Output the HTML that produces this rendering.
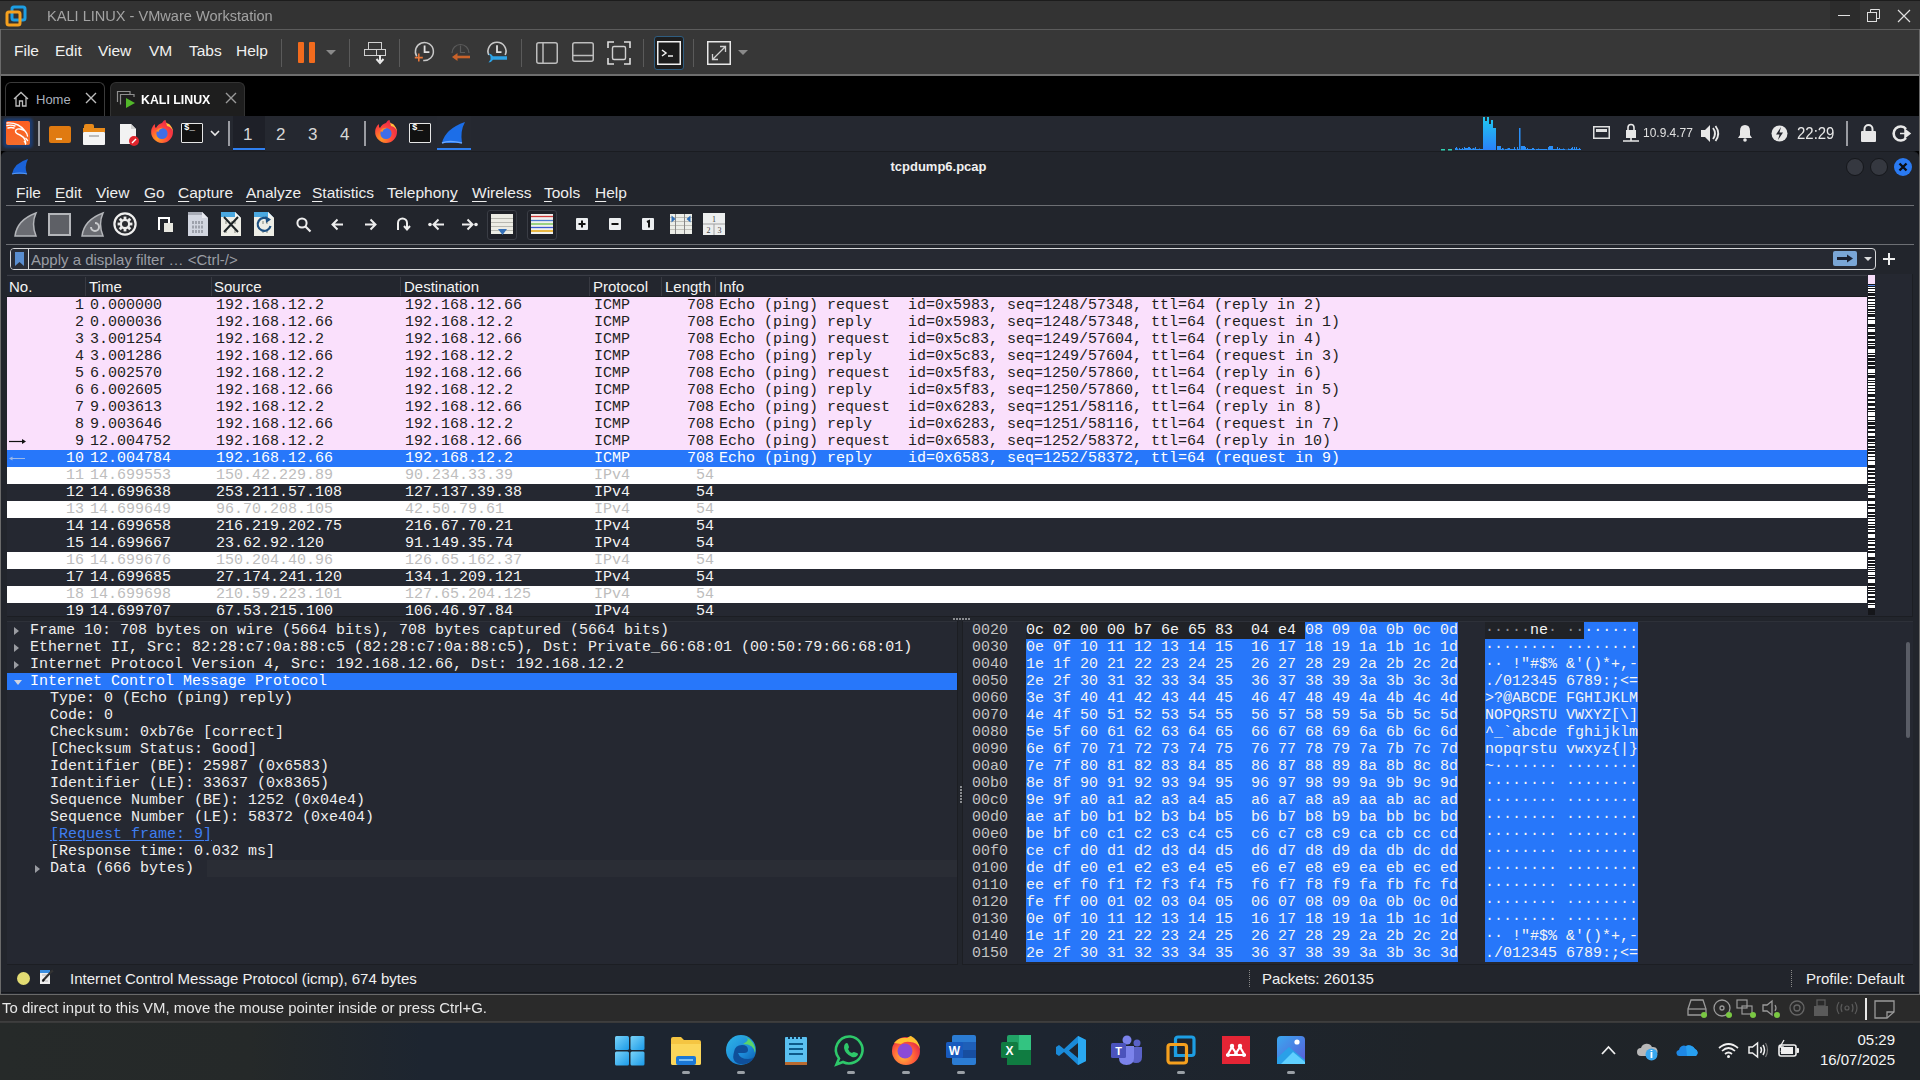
<!DOCTYPE html>
<html><head><meta charset="utf-8">
<style>
*{margin:0;padding:0;box-sizing:border-box}
html,body{width:1920px;height:1080px;overflow:hidden;background:#000;font-family:"Liberation Sans",sans-serif}
.a{position:absolute}
svg{position:absolute;overflow:visible}
/* vmware */
#vt{left:0;top:0;width:1920px;height:29px;background:#333333;border-top:1px solid #1c1c1c}
#vm{left:0;top:29px;width:1920px;height:47px;background:#373737;border-top:1px solid #5c5c5c;border-bottom:2px solid #6e6e6e}
.vmi{position:absolute;top:12px;font-size:15.5px;color:#f0f0f0}
.vsep{position:absolute;top:9px;width:1px;height:28px;background:#5a5a5a}
#tabs{left:0;top:76px;width:1920px;height:40px;background:#000}
.tab{position:absolute;top:6px;height:34px;border:1px solid #3a3a3a;border-bottom:none;border-radius:6px 6px 0 0}
/* kali panel */
#kp{left:0;top:116px;width:1920px;height:35px;background:#252830}
.ws{position:absolute;top:9px;font-size:17px;color:#d8d8d8}
/* wireshark */
#ww{left:1px;top:151px;width:1918px;height:843px;background:#22252c;border-radius:6px 6px 0 0;border-top:1px solid #1a1c21}
#edgeL{left:0;top:29px;width:1px;height:966px;background:#6a6a6a}
#edgeR{left:1919px;top:29px;width:1px;height:966px;background:#6a6a6a}
#wtitle{left:0;top:159px;width:1877px;text-align:center;font-size:13px;font-weight:bold;color:#f0f0f0}
.wm{position:absolute;top:184px;font-size:15.5px;color:#eeeeee}
.wm u{text-decoration:underline;text-decoration-thickness:1px;text-underline-offset:3px}
.wmn{position:absolute;top:183px;font-size:16px;color:#eeeeee}
#tbar{left:6px;top:205px;width:1908px;height:40px;border-top:1px solid #6d6f74;border-bottom:1px solid #6d6f74}
#filter{left:10px;top:248px;width:1866px;height:22px;border:1.5px solid #d7d8da;border-radius:4px;background:#262932}
/* packet list */
#plh{left:7px;top:275px;width:1860px;height:22px;background:#23262e;border-top:1px solid #3a3d45;border-bottom:1px solid #1a1c21}
.hd{position:absolute;top:278px;font-size:15px;color:#f4f4f4}
.hdv{position:absolute;top:277px;width:1px;height:19px;background:#383a42}
.pr{position:absolute;left:7px;width:1860px;height:17px;font-family:"Liberation Mono",monospace;font-size:15px;line-height:17px;white-space:pre}
.pr .c{position:absolute;top:0}
.pr.p{background:#fae0fc;color:#1e1e22}
.pr.s{background:#2777fa;color:#ffffff}
.pr.w{background:#ffffff;color:#bdbdbd}
.pr.d{background:#252831;color:#f4f4f4}
/* details */
#dp{left:7px;top:621px;width:950px;height:344px;background:#252831;border-top:1px solid #2e3139;border-bottom:1px solid #1c1e23}
.dr{position:absolute;left:7px;width:950px;height:17px;font-family:"Liberation Mono",monospace;font-size:15px;line-height:17px;color:#eeeeee;white-space:pre}
.dr .dt{position:absolute;top:0}
.dr.sel{background:#2777fa;color:#fff}
.dr.data{background:linear-gradient(90deg,#252831 0,#252831 200px,#2a2d35 200px)}
.dr.link .dt{color:#3f7ef0;text-decoration:underline;text-underline-offset:2px}
.tri{position:absolute;top:5px;width:0;height:0}
.tri.r{border-left:5px solid #9a9ca2;border-top:4px solid transparent;border-bottom:4px solid transparent;top:5px}
.tri.d{border-top:5px solid #d0d4e0;border-left:4px solid transparent;border-right:4px solid transparent;top:7px}
/* hex */
.hbg{position:absolute;height:17px}
.hbg.dk{background:#202227}
.hbg.bl{background:#2777fa}
.hr{position:absolute;left:0;width:1920px;height:17px;font-family:"Liberation Mono",monospace;font-size:15px;line-height:17px;white-space:pre;color:#f4f4f4}
.hr span{position:absolute;top:0}
.hr .ho{color:#c4c4c4}
.hr i{font-style:normal;color:#8a8c90}
/* status */
#st{left:1px;top:965px;width:1918px;height:28px;background:#22252c;border-bottom:1px solid #15171b}
#vs{left:0;top:994px;width:1920px;height:28px;background:#2a2a2a;border-top:1px solid #6a6a6a;border-bottom:1px solid #3e3e3e}
#tb{left:0;top:1022px;width:1920px;height:58px;background:linear-gradient(90deg,#262a29 0%,#252929 13%,#1d2530 22%,#1d2530 55%,#1f2429 75%,#202428 100%);border-top:1px solid #3a3a3a}
</style></head><body>

<!-- VMware title -->
<div id="vt" class="a">
 <svg style="left:5px;top:4px" width="22" height="22" viewBox="0 0 22 22">
  <rect x="7" y="2" width="13" height="13" rx="2" fill="none" stroke="#1d9ee3" stroke-width="3"/>
  <rect x="2" y="7" width="13" height="13" rx="2" fill="none" stroke="#f5a01e" stroke-width="3"/>
  <path d="M7 9.5 H13 M9.5 7 V13" stroke="#1d9ee3" stroke-width="0"/>
 </svg>
 <div class="a" style="left:47px;top:6px;font-size:15.5px;color:#a3a3a3;transform-origin:0 0;transform:scaleX(0.94);white-space:nowrap">KALI LINUX - VMware Workstation</div>
 <div class="a" style="left:1830px;top:0;width:30px;height:29px;background:#2c2c2c"></div>
 <div class="a" style="left:1838px;top:14px;width:12px;height:1px;background:#e0e0e0"></div>
 <svg style="left:1867px;top:8px" width="14" height="14"><rect x="0.5" y="3.5" width="9" height="9" fill="none" stroke="#e0e0e0"/><path d="M3.5 3.5V0.5H12.5V9.5H9.5" fill="none" stroke="#e0e0e0"/></svg>
 <svg style="left:1897px;top:8px" width="14" height="14"><path d="M1 1L13 13M13 1L1 13" stroke="#e0e0e0" stroke-width="1.2"/></svg>
</div>

<!-- VMware menu/toolbar -->
<div id="vm" class="a">
 <div class="vmi" style="left:14px">File</div>
 <div class="vmi" style="left:55px">Edit</div>
 <div class="vmi" style="left:98px">View</div>
 <div class="vmi" style="left:149px">VM</div>
 <div class="vmi" style="left:189px">Tabs</div>
 <div class="vmi" style="left:236px">Help</div>
 <div class="vsep" style="left:281px"></div>
 <div class="a" style="left:298px;top:12px;width:6px;height:21px;background:#f26b1d;border-radius:1px"></div>
 <div class="a" style="left:309px;top:12px;width:6px;height:21px;background:#f26b1d;border-radius:1px"></div>
 <svg style="left:326px;top:20px" width="10" height="6"><path d="M0 0H10L5 5Z" fill="#8a8a8a"/></svg>
 <div class="vsep" style="left:349px"></div>
 <svg style="left:364px;top:12px" width="22" height="23" viewBox="0 0 22 23">
  <rect x="4.5" y="0.5" width="13" height="7" fill="none" stroke="#d0d0d0"/>
  <rect x="0.5" y="7.5" width="21" height="6" fill="none" stroke="#d0d0d0"/>
  <path d="M12.5 7.5V13.5" stroke="#d0d0d0"/>
  <path d="M16 13V19M12.5 17L16 21L19.5 17" fill="none" stroke="#e8e8e8" stroke-width="2"/>
 </svg>
 <div class="vsep" style="left:399px"></div>
 <svg style="left:413px;top:12px" width="24" height="24" viewBox="0 0 24 24">
  <path d="M3.2 13.2A9 9 0 1 1 9 18.2" fill="none" stroke="#c8c8c8" stroke-width="1.5" transform="rotate(-8 11.3 9.7)"/>
  <path d="M11.6 3.5V10.2H16.4" fill="none" stroke="#e0e0e0" stroke-width="1.8"/>
  <path d="M1.8 15.6H9.8M5.8 11.6V19.6" stroke="#e8773a" stroke-width="1.6"/>
 </svg>
 <svg style="left:450px;top:12px" width="24" height="24" viewBox="0 0 24 24">
  <path d="M2 11A8.5 8.5 0 0 1 19 11" fill="none" stroke="#5a5a5a" stroke-width="1.2"/>
  <path d="M10.5 3.5V10.5H15" fill="none" stroke="#5a5a5a" stroke-width="1.2"/>
  <path d="M20 15H5" stroke="#c8622a" stroke-width="2.6"/>
  <path d="M7.5 11L2 15L7.5 19Z" fill="#c8622a"/>
 </svg>
 <svg style="left:486px;top:12px" width="24" height="24" viewBox="0 0 24 24">
  <path d="M2.8 13A9 9 0 1 1 19.2 13" fill="none" stroke="#c8c8c8" stroke-width="1.6"/>
  <path d="M11 3.2V10.2H15.5" fill="none" stroke="#e0e0e0" stroke-width="1.8"/>
  <path d="M7 14.2H21V17.8H7Q5.5 20.5 2.5 20.5L4.5 17.5V14.5L2.5 11.5Q5.5 11.5 7 14.2Z" fill="#2ea3e6"/>
 </svg>
 <div class="vsep" style="left:521px"></div>
 <svg style="left:536px;top:12px" width="22" height="22"><rect x="0.75" y="0.75" width="20.5" height="20.5" rx="2" fill="none" stroke="#bdbdbd" stroke-width="1.5"/><path d="M7 1V21" stroke="#bdbdbd" stroke-width="1.5"/></svg>
 <svg style="left:572px;top:12px" width="22" height="20"><rect x="0.75" y="0.75" width="20.5" height="18.5" rx="2" fill="none" stroke="#bdbdbd" stroke-width="1.5"/><path d="M1 13.5H21" stroke="#bdbdbd" stroke-width="1.5"/></svg>
 <svg style="left:607px;top:11px" width="24" height="24"><path d="M1 7V1H7M17 1H23V7M23 17V23H17M7 23H1V17" fill="none" stroke="#e0e0e0" stroke-width="1.6"/><rect x="5.5" y="5.5" width="13" height="13" rx="1.5" fill="none" stroke="#d0d0d0" stroke-width="1.4"/></svg>
 <div class="vsep" style="left:643px"></div>
 <div class="a" style="left:654px;top:6px;width:30px;height:34px;background:#1e1e1e;border:1.5px solid #2f5d80;border-radius:3px"></div>
 <svg style="left:657px;top:11px" width="24" height="24"><rect x="0.75" y="0.75" width="22.5" height="22.5" fill="#1c1c1c" stroke="#f0f0f0" stroke-width="1.5"/><path d="M5 9L9 12L5 15M11 15H16" fill="none" stroke="#f0f0f0" stroke-width="1.5"/></svg>
 <div class="vsep" style="left:693px"></div>
 <svg style="left:707px;top:11px" width="24" height="24"><rect x="0.75" y="0.75" width="22.5" height="22.5" fill="none" stroke="#e8e8e8" stroke-width="1.5"/><path d="M6 18L18 6M13 5.5H18.5V11M5.5 13V18.5H11" fill="none" stroke="#d0d0d0" stroke-width="1.3"/></svg>
 <svg style="left:738px;top:20px" width="10" height="6"><path d="M0 0H10L5 5Z" fill="#8a8a8a"/></svg>
</div>

<!-- Tabs -->
<div id="tabs" class="a">
 <div class="tab" style="left:5px;width:100px;background:#000"></div>
 <svg style="left:13px;top:15px" width="16" height="16"><path d="M1 8L8 1.5L15 8M3 6.5V15H6.5V10H9.5V15H13V6.5" fill="none" stroke="#bdbdbd" stroke-width="1.3"/></svg>
 <div class="a" style="left:36px;top:16px;font-size:13px;color:#aab0bd">Home</div>
 <svg style="left:85px;top:16px" width="12" height="12"><path d="M1 1L11 11M11 1L1 11" stroke="#bdbdbd" stroke-width="1.4"/></svg>
 <div class="tab" style="left:110px;width:135px;background:#1e1e1e;border-color:#333"></div>
 <svg style="left:117px;top:15px" width="20" height="18"><path d="M0.5 11V0.5H13V3" fill="none" stroke="#8f8f8f" stroke-width="1.2"/><path d="M3.5 13.5V3.5H17V6" fill="none" stroke="#8f8f8f" stroke-width="1.2"/><path d="M9 7L18 12L9 17Z" fill="#52b82a"/></svg>
 <div class="a" style="left:141px;top:16px;font-size:13px;font-weight:bold;color:#ffffff;white-space:nowrap;transform-origin:0 0;transform:scaleX(0.95)">KALI LINUX</div>
 <svg style="left:225px;top:16px" width="12" height="12"><path d="M1 1L11 11M11 1L1 11" stroke="#9a9a9a" stroke-width="1.4"/></svg>
</div>

<!-- Kali panel -->
<div id="kp" class="a">
 <div class="a" style="left:3px;top:2px;width:30px;height:30px;background:#1c3a6b;border-radius:4px;filter:blur(1px)"></div>
 <div class="a" style="left:6px;top:5px;width:24px;height:24px;background:linear-gradient(160deg,#ff5a1e,#f2702e);border-radius:2px"></div>
 <svg style="left:6px;top:5px" width="24" height="24"><path d="M1 2Q7 1.5 12 4Q16 6 19 10Q17 8.5 14 8Q10 7.5 9.5 10Q9.5 12.5 14 14Q18 16 19 19Q20 21.5 19.5 23M1 4.5Q5 3.5 9 5M2 7Q5 6 8 7M19 10Q21 12 21.5 15" fill="none" stroke="#fff" stroke-width="1.4" stroke-linecap="round"/><path d="M19.5 17L22 20M18 20L20 23" stroke="#fff" stroke-width="1.2"/></svg>
 <div class="a" style="left:38px;top:5px;width:2px;height:25px;background:#9a9ca2"></div>
 <div class="a" style="left:49px;top:10px;width:22px;height:17px;background:#e07a10;border-radius:2px"></div>
 <div class="a" style="left:56px;top:22px;width:6px;height:2px;background:#f5d9b0"></div>
 <div class="a" style="left:84px;top:8px;width:10px;height:5px;background:#e88a1a;border-radius:2px 2px 0 0"></div>
 <div class="a" style="left:83px;top:12px;width:22px;height:4px;background:#e88a1a"></div>
 <div class="a" style="left:83px;top:16px;width:22px;height:13px;background:#f4f4f4;border-radius:1px"></div>
 <div class="a" style="left:89px;top:19px;width:10px;height:2px;background:#bbb"></div>
 <svg style="left:119px;top:7px" width="22" height="23"><path d="M1 1H12L17 6V21H1Z" fill="#f2f2f2"/><path d="M12 1V6H17" fill="#d0d0d0"/><circle cx="15" cy="18" r="5" fill="#e0242c"/><path d="M13 20L17 16" stroke="#fff" stroke-width="1.5"/></svg>
 <svg style="left:150px;top:3px" width="24" height="25" viewBox="0 0 24 25"><defs><radialGradient id="ffg150" cx="0.3" cy="0.8" r="0.9"><stop offset="0" stop-color="#ff9a20"/><stop offset="0.5" stop-color="#ff4a3a"/><stop offset="1" stop-color="#e8204a"/></radialGradient></defs><path d="M12 24A11 11 0 0 1 1.5 10Q3 6 5 5Q4.5 8 6 9Q8 5 12 4Q14 0.5 15.5 1Q15 4 19 5Q23 9 23 13A11 11 0 0 1 12 24Z" fill="url(#ffg150)"/><path d="M15.5 1Q15 4 19 5Q23 9 23 13Q22 8 17 7Z" fill="#ffc23a"/><circle cx="12" cy="14.5" r="5.6" fill="#3f6ee8"/><path d="M6 12Q9 8 13 9Q9 10 8.5 13Z" fill="#ff8a2a"/></svg>
 <div class="a" style="left:181px;top:7px;width:22px;height:20px;background:#111;border:1.5px solid #e6e6e6;border-radius:1px"></div>
 <div class="a" style="left:184px;top:7px;font-size:9px;font-weight:bold;color:#fff;font-family:'Liberation Mono',monospace">$_</div>
 <svg style="left:210px;top:14px" width="10" height="7"><path d="M1 1L5 5L9 1" fill="none" stroke="#e8e8e8" stroke-width="1.6"/></svg>
 <div class="a" style="left:228px;top:5px;width:2px;height:25px;background:#9a9ca2"></div>
 <div class="a" style="left:233px;top:0;width:32px;height:35px;background:#1e2028"></div>
 <div class="a" style="left:233px;top:32px;width:32px;height:2px;background:#2f7ff0"></div>
 <div class="ws" style="left:243px">1</div>
 <div class="ws" style="left:276px">2</div>
 <div class="ws" style="left:308px">3</div>
 <div class="ws" style="left:340px">4</div>
 <div class="a" style="left:364px;top:5px;width:2px;height:25px;background:#9a9ca2"></div>
 <svg style="left:374px;top:3px" width="24" height="25" viewBox="0 0 24 25"><defs><radialGradient id="ffg374" cx="0.3" cy="0.8" r="0.9"><stop offset="0" stop-color="#ff9a20"/><stop offset="0.5" stop-color="#ff4a3a"/><stop offset="1" stop-color="#e8204a"/></radialGradient></defs><path d="M12 24A11 11 0 0 1 1.5 10Q3 6 5 5Q4.5 8 6 9Q8 5 12 4Q14 0.5 15.5 1Q15 4 19 5Q23 9 23 13A11 11 0 0 1 12 24Z" fill="url(#ffg374)"/><path d="M15.5 1Q15 4 19 5Q23 9 23 13Q22 8 17 7Z" fill="#ffc23a"/><circle cx="12" cy="14.5" r="5.6" fill="#3f6ee8"/><path d="M6 12Q9 8 13 9Q9 10 8.5 13Z" fill="#ff8a2a"/></svg>
 <div class="a" style="left:409px;top:7px;width:22px;height:20px;background:#111;border:1.5px solid #e6e6e6;border-radius:1px"></div>
 <div class="a" style="left:412px;top:7px;font-size:9px;font-weight:bold;color:#fff;font-family:'Liberation Mono',monospace">$_</div>
 <div class="a" style="left:437px;top:0;width:34px;height:35px;background:#262931"></div>
 <svg style="left:441px;top:5px" width="26" height="24"><path d="M1 22Q4 8 24 1Q19 10 21 22Z" fill="#1c6ee8"/><path d="M1 22Q8 19 21 22" fill="none" stroke="#6aa8ff" stroke-width="1.5"/></svg>
 <div class="a" style="left:437px;top:32px;width:34px;height:2px;background:#2f7ff0"></div>
 <!-- right side -->
 <svg style="left:1441px;top:0px" width="142" height="35"><rect x="0" y="33" width="4" height="1.5" fill="#2fd0b0"/><rect x="7" y="33" width="4" height="1.5" fill="#2fd0b0"/><rect x="14" y="32" width="1" height="2" fill="#2a8ff8"/><rect x="15" y="31" width="1" height="3" fill="#2a8ff8"/><rect x="16" y="32.5" width="1" height="1.5" fill="#2a8ff8"/><rect x="17" y="33.5" width="1" height="0.5" fill="#2a8ff8"/><rect x="18" y="32" width="1" height="2" fill="#2a8ff8"/><rect x="19" y="33" width="1" height="1" fill="#2a8ff8"/><rect x="20" y="33" width="1" height="1" fill="#2a8ff8"/><rect x="21" y="32" width="1" height="2" fill="#2a8ff8"/><rect x="22" y="33" width="1" height="1" fill="#2a8ff8"/><rect x="23" y="31" width="1" height="3" fill="#2a8ff8"/><rect x="24" y="32" width="1" height="2" fill="#2a8ff8"/><rect x="25" y="32" width="1" height="2" fill="#2a8ff8"/><rect x="26" y="32" width="1" height="2" fill="#2a8ff8"/><rect x="27" y="31" width="1" height="3" fill="#2a8ff8"/><rect x="28" y="31" width="1" height="3" fill="#2a8ff8"/><rect x="29" y="32" width="1" height="2" fill="#2a8ff8"/><rect x="30" y="33" width="1" height="1" fill="#2a8ff8"/><rect x="31" y="32.5" width="1" height="1.5" fill="#2a8ff8"/><rect x="32" y="32" width="1" height="2" fill="#2a8ff8"/><rect x="33" y="32.5" width="1" height="1.5" fill="#2a8ff8"/><rect x="34" y="31" width="1" height="3" fill="#2a8ff8"/><rect x="35" y="33" width="1" height="1" fill="#2a8ff8"/><rect x="36" y="33" width="1" height="1" fill="#2a8ff8"/><rect x="37" y="33" width="1" height="1" fill="#2a8ff8"/><rect x="38" y="32.5" width="1" height="1.5" fill="#2a8ff8"/><rect x="39" y="33" width="1" height="1" fill="#2a8ff8"/><rect x="40" y="33" width="1" height="1" fill="#2a8ff8"/><rect x="41" y="33" width="1" height="1" fill="#2a8ff8"/><rect x="56" y="33" width="1" height="1" fill="#2a8ff8"/><rect x="57" y="32" width="1" height="2" fill="#2a8ff8"/><rect x="58" y="33" width="1" height="1" fill="#2a8ff8"/><rect x="59" y="33" width="1" height="1" fill="#2a8ff8"/><rect x="60" y="33" width="1" height="1" fill="#2a8ff8"/><rect x="61" y="32" width="1" height="2" fill="#2a8ff8"/><rect x="62" y="32.5" width="1" height="1.5" fill="#2a8ff8"/><rect x="63" y="33.5" width="1" height="0.5" fill="#2a8ff8"/><rect x="64" y="33" width="1" height="1" fill="#2a8ff8"/><rect x="65" y="33" width="1" height="1" fill="#2a8ff8"/><rect x="66" y="32.5" width="1" height="1.5" fill="#2a8ff8"/><rect x="67" y="32" width="1" height="2" fill="#2a8ff8"/><rect x="68" y="32" width="1" height="2" fill="#2a8ff8"/><rect x="69" y="33" width="1" height="1" fill="#2a8ff8"/><rect x="70" y="33" width="1" height="1" fill="#2a8ff8"/><rect x="71" y="33" width="1" height="1" fill="#2a8ff8"/><rect x="72" y="33" width="1" height="1" fill="#2a8ff8"/><rect x="73" y="31" width="1" height="3" fill="#2a8ff8"/><rect x="74" y="33" width="1" height="1" fill="#2a8ff8"/><rect x="75" y="33.5" width="1" height="0.5" fill="#2a8ff8"/><rect x="76" y="31" width="1" height="3" fill="#2a8ff8"/><rect x="77" y="33" width="1" height="1" fill="#2a8ff8"/><rect x="78" y="32" width="1" height="2" fill="#2a8ff8"/><rect x="79" y="33.5" width="1" height="0.5" fill="#2a8ff8"/><rect x="80" y="33" width="1" height="1" fill="#2a8ff8"/><rect x="81" y="33" width="1" height="1" fill="#2a8ff8"/><rect x="82" y="32.5" width="1" height="1.5" fill="#2a8ff8"/><rect x="83" y="33.5" width="1" height="0.5" fill="#2a8ff8"/><rect x="84" y="31" width="1" height="3" fill="#2a8ff8"/><rect x="85" y="33" width="1" height="1" fill="#2a8ff8"/><rect x="86" y="32" width="1" height="2" fill="#2a8ff8"/><rect x="87" y="33" width="1" height="1" fill="#2a8ff8"/><rect x="88" y="33" width="1" height="1" fill="#2a8ff8"/><rect x="89" y="33" width="1" height="1" fill="#2a8ff8"/><rect x="90" y="33" width="1" height="1" fill="#2a8ff8"/><rect x="91" y="32" width="1" height="2" fill="#2a8ff8"/><rect x="92" y="32" width="1" height="2" fill="#2a8ff8"/><rect x="93" y="33" width="1" height="1" fill="#2a8ff8"/><rect x="94" y="33.5" width="1" height="0.5" fill="#2a8ff8"/><rect x="95" y="33" width="1" height="1" fill="#2a8ff8"/><rect x="96" y="33" width="1" height="1" fill="#2a8ff8"/><rect x="97" y="32.5" width="1" height="1.5" fill="#2a8ff8"/><rect x="98" y="33" width="1" height="1" fill="#2a8ff8"/><rect x="99" y="33" width="1" height="1" fill="#2a8ff8"/><rect x="100" y="33" width="1" height="1" fill="#2a8ff8"/><rect x="101" y="33" width="1" height="1" fill="#2a8ff8"/><rect x="102" y="33" width="1" height="1" fill="#2a8ff8"/><rect x="103" y="33" width="1" height="1" fill="#2a8ff8"/><rect x="104" y="33" width="1" height="1" fill="#2a8ff8"/><rect x="105" y="33" width="1" height="1" fill="#2a8ff8"/><rect x="106" y="33.5" width="1" height="0.5" fill="#2a8ff8"/><rect x="107" y="31" width="1" height="3" fill="#2a8ff8"/><rect x="108" y="33" width="1" height="1" fill="#2a8ff8"/><rect x="109" y="31" width="1" height="3" fill="#2a8ff8"/><rect x="110" y="32" width="1" height="2" fill="#2a8ff8"/><rect x="111" y="33" width="1" height="1" fill="#2a8ff8"/><rect x="112" y="33" width="1" height="1" fill="#2a8ff8"/><rect x="113" y="33" width="1" height="1" fill="#2a8ff8"/><rect x="114" y="33" width="1" height="1" fill="#2a8ff8"/><rect x="115" y="33" width="1" height="1" fill="#2a8ff8"/><rect x="116" y="31" width="1" height="3" fill="#2a8ff8"/><rect x="117" y="33" width="1" height="1" fill="#2a8ff8"/><rect x="118" y="32" width="1" height="2" fill="#2a8ff8"/><rect x="119" y="33" width="1" height="1" fill="#2a8ff8"/><rect x="120" y="33" width="1" height="1" fill="#2a8ff8"/><rect x="121" y="33" width="1" height="1" fill="#2a8ff8"/><rect x="122" y="32.5" width="1" height="1.5" fill="#2a8ff8"/><rect x="123" y="33" width="1" height="1" fill="#2a8ff8"/><rect x="124" y="33.5" width="1" height="0.5" fill="#2a8ff8"/><rect x="125" y="33.5" width="1" height="0.5" fill="#2a8ff8"/><rect x="126" y="33.5" width="1" height="0.5" fill="#2a8ff8"/><rect x="127" y="32.5" width="1" height="1.5" fill="#2a8ff8"/><rect x="128" y="33" width="1" height="1" fill="#2a8ff8"/><rect x="129" y="33" width="1" height="1" fill="#2a8ff8"/><rect x="130" y="32" width="1" height="2" fill="#2a8ff8"/><rect x="131" y="31" width="1" height="3" fill="#2a8ff8"/><rect x="132" y="33" width="1" height="1" fill="#2a8ff8"/><rect x="133" y="31" width="1" height="3" fill="#2a8ff8"/><rect x="134" y="33" width="1" height="1" fill="#2a8ff8"/><rect x="135" y="31" width="1" height="3" fill="#2a8ff8"/><rect x="136" y="33" width="1" height="1" fill="#2a8ff8"/><rect x="137" y="33" width="1" height="1" fill="#2a8ff8"/><rect x="138" y="32" width="1" height="2" fill="#2a8ff8"/><rect x="139" y="33" width="1" height="1" fill="#2a8ff8"/><defs><linearGradient id="spk" x1="0" y1="0" x2="0" y2="1"><stop offset="0" stop-color="#20c8f0"/><stop offset="1" stop-color="#2a80f8"/></linearGradient></defs><path d="M42 34V1H44V5H46V1H48V8H50V4H52V12H55V34Z" fill="url(#spk)"/><path d="M56 34V30H60V34ZM78 34V12H79.5V34ZM80 34V30H84V34ZM108 34V30H112V34Z" fill="#2a8ff8"/></svg>
 <svg style="left:1593px;top:10px" width="17" height="14"><rect x="0.75" y="0.75" width="15.5" height="11.5" fill="none" stroke="#e0e0e0" stroke-width="1.5"/><path d="M3 3H14V6H3Z" fill="#e0e0e0"/></svg>
 <svg style="left:1623px;top:8px" width="17" height="19"><rect x="3" y="6" width="10" height="8" fill="#e8e8e8"/><path d="M5 6V3.5A3 3 0 0 1 11 3.5V6" fill="none" stroke="#e8e8e8" stroke-width="1.6"/><path d="M0 17H16M8 14V17" stroke="#e8e8e8" stroke-width="1.6"/></svg>
 <div class="a" style="left:1643px;top:9px;font-size:13px;color:#e0e0e0;white-space:nowrap;transform-origin:0 0;transform:scaleX(0.92)">10.9.4.77</div>
 <svg style="left:1701px;top:9px" width="19" height="17"><path d="M0 5H4L9 0V17L4 12H0Z" fill="#e8e8e8"/><path d="M12 3Q16 8.5 12 14M14.5 1Q20 8.5 14.5 16" fill="none" stroke="#e8e8e8" stroke-width="1.8"/></svg>
 <svg style="left:1737px;top:8px" width="16" height="18"><path d="M8 1Q3 1 3 7V11L1 14H15L13 11V7Q13 1 8 1Z" fill="#e8e8e8"/><circle cx="8" cy="16" r="1.8" fill="#e8e8e8"/></svg>
 <svg style="left:1771px;top:9px" width="17" height="17"><circle cx="8.5" cy="8.5" r="8" fill="#e8e8e8"/><path d="M10 2L5 9.5H8.5L7 15L12 7.5H8.5Z" fill="#23252d"/></svg>
 <div class="a" style="left:1797px;top:8px;font-size:17px;color:#e8e8e8;white-space:nowrap;transform-origin:0 0;transform:scaleX(0.88)">22:29</div>
 <div class="a" style="left:1846px;top:5px;width:2px;height:25px;background:#9a9ca2"></div>
 <svg style="left:1861px;top:8px" width="15" height="18"><rect x="0" y="7" width="15" height="11" rx="1" fill="#e8e8e8"/><path d="M3.5 7V5A4 4 0 0 1 11.5 5V7" fill="none" stroke="#e8e8e8" stroke-width="2"/></svg>
 <svg style="left:1893px;top:9px" width="19" height="17"><path d="M13 4A7 7 0 1 0 13 13" fill="none" stroke="#e8e8e8" stroke-width="2.6"/><path d="M7 8.5H14M12 4.5L17 8.5L12 12.5Z" fill="#e8e8e8" stroke="#e8e8e8" stroke-width="1.5"/></svg>
</div>

<!-- Wireshark window -->
<div id="ww" class="a"></div><div id="edgeL" class="a"></div><div id="edgeR" class="a"></div>
<svg style="left:12px;top:159px" width="17" height="16"><path d="M0 15Q2 4 16 0Q12 8 15 15Z" fill="#1a62d8"/><path d="M0 15Q8 13 15 15" fill="none" stroke="#5a9af0" stroke-width="1.2"/></svg>
<div id="wtitle" class="a">tcpdump6.pcap</div>
<div class="a" style="left:1846px;top:158px;width:18px;height:18px;border-radius:50%;background:#353840;border:1px solid #15171b"></div>
<div class="a" style="left:1870px;top:158px;width:18px;height:18px;border-radius:50%;background:#353840;border:1px solid #15171b"></div>
<div class="a" style="left:1894px;top:158px;width:18px;height:18px;border-radius:50%;background:#2a7af2"></div>
<svg style="left:1897px;top:161px" width="12" height="12"><path d="M2.5 2.5L9.5 9.5M9.5 2.5L2.5 9.5" stroke="#0c0e14" stroke-width="2.4"/></svg>

<div class="wm" style="left:16px"><u>F</u>ile</div>
<div class="wm" style="left:55px"><u>E</u>dit</div>
<div class="wm" style="left:96px"><u>V</u>iew</div>
<div class="wm" style="left:144px"><u>G</u>o</div>
<div class="wm" style="left:178px"><u>C</u>apture</div>
<div class="wm" style="left:246px"><u>A</u>nalyze</div>
<div class="wm" style="left:312px"><u>S</u>tatistics</div>
<div class="wm" style="left:387px">Telephon<u>y</u></div>
<div class="wm" style="left:472px"><u>W</u>ireless</div>
<div class="wm" style="left:544px"><u>T</u>ools</div>
<div class="wm" style="left:595px"><u>H</u>elp</div>

<div id="tbar" class="a"></div>
<!-- toolbar icons -->
<svg style="left:14px;top:212px" width="24" height="25"><path d="M1 24Q3 8 22 1Q17 12 22 24Z" fill="#6a6c72" stroke="#b4b6ba" stroke-width="1.5"/></svg>
<svg style="left:48px;top:213px" width="23" height="23"><rect x="1" y="1" width="21" height="21" fill="#5e6066" stroke="#b4b6ba" stroke-width="2"/></svg>
<svg style="left:81px;top:212px" width="24" height="25"><path d="M1 24Q3 8 22 1Q17 12 22 24Z" fill="#6a6c72" stroke="#b4b6ba" stroke-width="1.5"/><path d="M14 11A4 4 0 1 1 10 15" fill="none" stroke="#c8cacc" stroke-width="2"/></svg>
<svg style="left:113px;top:212px" width="24" height="24"><circle cx="12" cy="12" r="10.6" fill="#2a2c30" stroke="#f0f0f0" stroke-width="2.2"/><rect x="10.6" y="4.6" width="2.8" height="3" fill="#ececec" transform="rotate(0 12 12)"/><rect x="10.6" y="4.6" width="2.8" height="3" fill="#ececec" transform="rotate(45 12 12)"/><rect x="10.6" y="4.6" width="2.8" height="3" fill="#ececec" transform="rotate(90 12 12)"/><rect x="10.6" y="4.6" width="2.8" height="3" fill="#ececec" transform="rotate(135 12 12)"/><rect x="10.6" y="4.6" width="2.8" height="3" fill="#ececec" transform="rotate(180 12 12)"/><rect x="10.6" y="4.6" width="2.8" height="3" fill="#ececec" transform="rotate(225 12 12)"/><rect x="10.6" y="4.6" width="2.8" height="3" fill="#ececec" transform="rotate(270 12 12)"/><rect x="10.6" y="4.6" width="2.8" height="3" fill="#ececec" transform="rotate(315 12 12)"/><circle cx="12" cy="12" r="5.2" fill="#ececec"/><circle cx="12" cy="12" r="3" fill="#2a2c30"/></svg>
<svg style="left:158px;top:217px" width="15" height="15"><path d="M1 13V1H11V6" fill="none" stroke="#fff" stroke-width="2"/><rect x="6" y="6" width="9" height="9" fill="#e8e8e0"/></svg>
<svg style="left:188px;top:212px" width="21" height="24"><path d="M0 0H14L20 6V24H0Z" fill="#d2d6e0"/><path d="M0 0H14L17 3H0Z" fill="#a8acb6"/><path d="M14 0V6H20Z" fill="#e8eaf0"/><g fill="#9ea2ac"><rect x="4" y="9" width="2" height="3"/><rect x="7" y="9" width="2" height="3"/><rect x="10" y="9" width="2" height="3"/><rect x="13" y="9" width="2" height="3"/><rect x="4" y="13.5" width="2" height="3"/><rect x="7" y="13.5" width="2" height="3"/><rect x="10" y="13.5" width="2" height="3"/><rect x="13" y="13.5" width="2" height="3"/><rect x="4" y="18" width="2" height="3"/><rect x="7" y="18" width="2" height="3"/><rect x="10" y="18" width="2" height="3"/><rect x="13" y="18" width="2" height="3"/></g></svg>
<svg style="left:221px;top:212px" width="21" height="24"><path d="M0 0H14L20 6V24H0Z" fill="#eeeee6"/><path d="M0 0H14L19 5H0Z" fill="#4aa8e0"/><path d="M14 0V6H20Z" fill="#f4f4f0"/><g fill="#b8bab0"><rect x="4" y="9" width="2" height="3"/><rect x="10" y="9" width="2" height="3"/><rect x="13" y="9" width="2" height="3"/><rect x="4" y="18" width="2" height="3"/><rect x="13" y="18" width="2" height="3"/></g><path d="M3 5L17 20M17 5L3 20" stroke="#1e2426" stroke-width="2"/></svg>
<svg style="left:254px;top:212px" width="21" height="24"><path d="M0 0H14L20 6V24H0Z" fill="#eeeee6"/><path d="M0 0H14L19 5H0Z" fill="#4aa8e0"/><path d="M14 0V6H20Z" fill="#f4f4f0"/><g fill="#b8bab0"><rect x="8" y="9" width="2" height="3"/><rect x="12" y="9" width="2" height="3"/><rect x="8" y="18" width="2" height="3"/><rect x="12" y="18" width="2" height="3"/></g><path d="M14.5 7.5A6.5 6.5 0 1 0 16.5 14" fill="none" stroke="#1c4f80" stroke-width="2.2"/><path d="M11.5 4L17 7.5L12 11Z" fill="#1c4f80"/></svg>
<svg style="left:296px;top:217px" width="16" height="16"><circle cx="6" cy="6" r="4.6" fill="none" stroke="#eee" stroke-width="2"/><path d="M9.5 9.5L14.5 14.5" stroke="#eee" stroke-width="2.2"/></svg>
<svg style="left:331px;top:218px" width="13" height="13"><path d="M12 6.5H2M6.5 1.5L1.5 6.5L6.5 11.5" fill="none" stroke="#eee" stroke-width="2"/></svg>
<svg style="left:364px;top:218px" width="13" height="13"><path d="M1 6.5H11M6.5 1.5L11.5 6.5L6.5 11.5" fill="none" stroke="#eee" stroke-width="2"/></svg>
<svg style="left:396px;top:217px" width="14" height="14"><path d="M2 13V6A4.5 4.5 0 0 1 11 6V11" fill="none" stroke="#eee" stroke-width="2"/><path d="M8 9L11 12.5L14 9" fill="none" stroke="#eee" stroke-width="2"/></svg>
<svg style="left:428px;top:218px" width="17" height="13"><circle cx="2" cy="6.5" r="1.8" fill="#eee"/><path d="M16 6.5H6M10.5 1.5L5.5 6.5L10.5 11.5" fill="none" stroke="#eee" stroke-width="2"/></svg>
<svg style="left:461px;top:218px" width="17" height="13"><circle cx="15" cy="6.5" r="1.8" fill="#eee"/><path d="M1 6.5H11M6.5 1.5L11.5 6.5L6.5 11.5" fill="none" stroke="#eee" stroke-width="2"/></svg>
<div class="a" style="left:487px;top:210px;width:30px;height:30px;border:1px solid #3a3d45;border-radius:3px;background:#1f2128"></div>
<svg style="left:491px;top:214px" width="22" height="21"><rect x="0" y="0" width="22" height="20" fill="#ecece4"/><path d="M0 4.5H22M0 8.5H22M0 12.5H22M0 16.5H22" stroke="#b8b8b0" stroke-width="1"/><path d="M7 15H16L11.5 21Z" fill="#3570b8"/></svg>
<div class="a" style="left:527px;top:210px;width:30px;height:30px;border:1px solid #3a3d45;border-radius:3px;background:#1f2128"></div>
<svg style="left:531px;top:214px" width="22" height="21"><rect x="0" y="0" width="22" height="20" fill="#f0f0ee"/><path d="M0 2.5H22" stroke="#d03a3a" stroke-width="1.3"/><path d="M0 6.5H22" stroke="#4a7ad0" stroke-width="1.3"/><path d="M0 10H22" stroke="#6ac04a" stroke-width="1.3"/><path d="M0 13.5H22" stroke="#3a5ad0" stroke-width="1.3"/><path d="M0 17H22" stroke="#e8b030" stroke-width="1.8"/></svg>
<svg style="left:576px;top:218px" width="12" height="12"><rect x="0" y="0" width="12" height="12" rx="1" fill="#eceef0"/><path d="M6 2.5V9.5M2.5 6H9.5" stroke="#111" stroke-width="2"/></svg>
<svg style="left:609px;top:218px" width="12" height="12"><rect x="0" y="0" width="12" height="12" rx="1" fill="#eceef0"/><path d="M2.5 6H9.5" stroke="#111" stroke-width="2"/></svg>
<svg style="left:642px;top:218px" width="12" height="12"><rect x="0" y="0" width="12" height="12" rx="1" fill="#eceef0"/><path d="M5 4L7 3V9.5" fill="none" stroke="#111" stroke-width="2"/></svg>
<svg style="left:670px;top:214px" width="22" height="20"><rect x="0" y="0" width="22" height="20" fill="#eceee8"/><path d="M0 3.5H22M0 7.5H22M0 11.5H22M0 15.5H22" stroke="#c0c0b8" stroke-width="1"/><path d="M5.5 0V20M14.5 0V20" stroke="#888" stroke-width="1"/><path d="M1.5 1.5L5.5 5L1.5 8.5Z M20.5 1.5L16.5 5L20.5 8.5Z" fill="#2f6fb8"/></svg>
<svg style="left:703px;top:213px" width="22" height="22"><rect x="0" y="0" width="22" height="22" fill="#eceeee"/><path d="M0 11H22M11 11V22" stroke="#a0a0a0" stroke-width="1"/><text x="11" y="8.5" font-size="8" text-anchor="middle" fill="#444" font-family="Liberation Serif">1</text><text x="5.5" y="19.5" font-size="8" text-anchor="middle" fill="#444" font-family="Liberation Serif">2</text><text x="16.5" y="19.5" font-size="8" text-anchor="middle" fill="#444" font-family="Liberation Serif">3</text></svg>

<!-- filter -->
<div id="filter" class="a"></div>
<div class="a" style="left:11px;top:249px;width:18px;height:20px;background:#2a2d36;border-right:1.5px solid #d7d8da;border-radius:3px 0 0 3px"></div>
<svg style="left:15px;top:252px" width="9" height="14"><path d="M0 0H9V14L4.5 10L0 14Z" fill="#5a8ed0"/></svg>
<div class="a" style="left:31px;top:251px;font-size:15px;color:#9a9da4">Apply a display filter … &lt;Ctrl-/&gt;</div>
<div class="a" style="left:1833px;top:251px;width:24px;height:15px;background:#7aa6d6;border-radius:2px"></div>
<svg style="left:1836px;top:254px" width="18" height="9"><path d="M1 3H11V0.5L17 4.5L11 8.5V6H1Z" fill="#1a2030"/></svg>
<svg style="left:1864px;top:257px" width="8" height="5"><path d="M0 0H8L4 4Z" fill="#dcdcdc"/></svg>
<svg style="left:1882px;top:252px" width="14" height="14"><path d="M7 1V13M1 7H13" stroke="#eee" stroke-width="2"/></svg>

<!-- packet list header -->
<div class="a" style="left:7px;top:274px;width:1906px;height:342px;background:#252831;border-right:1px solid #1c1e23"></div>
<div id="plh" class="a"></div>
<div class="hdv" style="left:85px"></div>
<div class="hdv" style="left:211px"></div>
<div class="hdv" style="left:400px"></div>
<div class="hdv" style="left:589px"></div>
<div class="hdv" style="left:661px"></div>
<div class="hdv" style="left:715px"></div>
<div class="hd" style="left:9px">No.</div>
<div class="hd" style="left:89px">Time</div>
<div class="hd" style="left:214px">Source</div>
<div class="hd" style="left:404px">Destination</div>
<div class="hd" style="left:593px">Protocol</div>
<div class="hd" style="left:665px">Length</div>
<div class="hd" style="left:719px">Info</div>

<div class="pr p" style="top:297px"><span class="c" style="left:0;width:77px;text-align:right">1</span><span class="c" style="left:83px">0.000000</span><span class="c" style="left:209px">192.168.12.2</span><span class="c" style="left:398px">192.168.12.66</span><span class="c" style="left:587px">ICMP</span><span class="c" style="left:600px;width:107px;text-align:right">708</span><span class="c" style="left:712px;white-space:pre">Echo&#32;(ping)&#32;request&#32;&#32;id=0x5983,&#32;seq=1248/57348,&#32;ttl=64&#32;(reply&#32;in&#32;2)</span></div>
<div class="pr p" style="top:314px"><span class="c" style="left:0;width:77px;text-align:right">2</span><span class="c" style="left:83px">0.000036</span><span class="c" style="left:209px">192.168.12.66</span><span class="c" style="left:398px">192.168.12.2</span><span class="c" style="left:587px">ICMP</span><span class="c" style="left:600px;width:107px;text-align:right">708</span><span class="c" style="left:712px;white-space:pre">Echo&#32;(ping)&#32;reply&#32;&#32;&#32;&#32;id=0x5983,&#32;seq=1248/57348,&#32;ttl=64&#32;(request&#32;in&#32;1)</span></div>
<div class="pr p" style="top:331px"><span class="c" style="left:0;width:77px;text-align:right">3</span><span class="c" style="left:83px">3.001254</span><span class="c" style="left:209px">192.168.12.2</span><span class="c" style="left:398px">192.168.12.66</span><span class="c" style="left:587px">ICMP</span><span class="c" style="left:600px;width:107px;text-align:right">708</span><span class="c" style="left:712px;white-space:pre">Echo&#32;(ping)&#32;request&#32;&#32;id=0x5c83,&#32;seq=1249/57604,&#32;ttl=64&#32;(reply&#32;in&#32;4)</span></div>
<div class="pr p" style="top:348px"><span class="c" style="left:0;width:77px;text-align:right">4</span><span class="c" style="left:83px">3.001286</span><span class="c" style="left:209px">192.168.12.66</span><span class="c" style="left:398px">192.168.12.2</span><span class="c" style="left:587px">ICMP</span><span class="c" style="left:600px;width:107px;text-align:right">708</span><span class="c" style="left:712px;white-space:pre">Echo&#32;(ping)&#32;reply&#32;&#32;&#32;&#32;id=0x5c83,&#32;seq=1249/57604,&#32;ttl=64&#32;(request&#32;in&#32;3)</span></div>
<div class="pr p" style="top:365px"><span class="c" style="left:0;width:77px;text-align:right">5</span><span class="c" style="left:83px">6.002570</span><span class="c" style="left:209px">192.168.12.2</span><span class="c" style="left:398px">192.168.12.66</span><span class="c" style="left:587px">ICMP</span><span class="c" style="left:600px;width:107px;text-align:right">708</span><span class="c" style="left:712px;white-space:pre">Echo&#32;(ping)&#32;request&#32;&#32;id=0x5f83,&#32;seq=1250/57860,&#32;ttl=64&#32;(reply&#32;in&#32;6)</span></div>
<div class="pr p" style="top:382px"><span class="c" style="left:0;width:77px;text-align:right">6</span><span class="c" style="left:83px">6.002605</span><span class="c" style="left:209px">192.168.12.66</span><span class="c" style="left:398px">192.168.12.2</span><span class="c" style="left:587px">ICMP</span><span class="c" style="left:600px;width:107px;text-align:right">708</span><span class="c" style="left:712px;white-space:pre">Echo&#32;(ping)&#32;reply&#32;&#32;&#32;&#32;id=0x5f83,&#32;seq=1250/57860,&#32;ttl=64&#32;(request&#32;in&#32;5)</span></div>
<div class="pr p" style="top:399px"><span class="c" style="left:0;width:77px;text-align:right">7</span><span class="c" style="left:83px">9.003613</span><span class="c" style="left:209px">192.168.12.2</span><span class="c" style="left:398px">192.168.12.66</span><span class="c" style="left:587px">ICMP</span><span class="c" style="left:600px;width:107px;text-align:right">708</span><span class="c" style="left:712px;white-space:pre">Echo&#32;(ping)&#32;request&#32;&#32;id=0x6283,&#32;seq=1251/58116,&#32;ttl=64&#32;(reply&#32;in&#32;8)</span></div>
<div class="pr p" style="top:416px"><span class="c" style="left:0;width:77px;text-align:right">8</span><span class="c" style="left:83px">9.003646</span><span class="c" style="left:209px">192.168.12.66</span><span class="c" style="left:398px">192.168.12.2</span><span class="c" style="left:587px">ICMP</span><span class="c" style="left:600px;width:107px;text-align:right">708</span><span class="c" style="left:712px;white-space:pre">Echo&#32;(ping)&#32;reply&#32;&#32;&#32;&#32;id=0x6283,&#32;seq=1251/58116,&#32;ttl=64&#32;(request&#32;in&#32;7)</span></div>
<div class="pr p" style="top:433px"><span class="c" style="left:0;width:77px;text-align:right">9</span><span class="c" style="left:83px">12.004752</span><span class="c" style="left:209px">192.168.12.2</span><span class="c" style="left:398px">192.168.12.66</span><span class="c" style="left:587px">ICMP</span><span class="c" style="left:600px;width:107px;text-align:right">708</span><span class="c" style="left:712px;white-space:pre">Echo&#32;(ping)&#32;request&#32;&#32;id=0x6583,&#32;seq=1252/58372,&#32;ttl=64&#32;(reply&#32;in&#32;10)</span></div>
<div class="pr s" style="top:450px"><span class="c" style="left:0;width:77px;text-align:right">10</span><span class="c" style="left:83px">12.004784</span><span class="c" style="left:209px">192.168.12.66</span><span class="c" style="left:398px">192.168.12.2</span><span class="c" style="left:587px">ICMP</span><span class="c" style="left:600px;width:107px;text-align:right">708</span><span class="c" style="left:712px;white-space:pre">Echo&#32;(ping)&#32;reply&#32;&#32;&#32;&#32;id=0x6583,&#32;seq=1252/58372,&#32;ttl=64&#32;(request&#32;in&#32;9)</span></div>
<div class="pr w" style="top:467px"><span class="c" style="left:0;width:77px;text-align:right">11</span><span class="c" style="left:83px">14.699553</span><span class="c" style="left:209px">150.42.229.89</span><span class="c" style="left:398px">90.234.33.39</span><span class="c" style="left:587px">IPv4</span><span class="c" style="left:600px;width:107px;text-align:right">54</span><span class="c" style="left:712px;white-space:pre"></span></div>
<div class="pr d" style="top:484px"><span class="c" style="left:0;width:77px;text-align:right">12</span><span class="c" style="left:83px">14.699638</span><span class="c" style="left:209px">253.211.57.108</span><span class="c" style="left:398px">127.137.39.38</span><span class="c" style="left:587px">IPv4</span><span class="c" style="left:600px;width:107px;text-align:right">54</span><span class="c" style="left:712px;white-space:pre"></span></div>
<div class="pr w" style="top:501px"><span class="c" style="left:0;width:77px;text-align:right">13</span><span class="c" style="left:83px">14.699649</span><span class="c" style="left:209px">96.70.208.105</span><span class="c" style="left:398px">42.50.79.61</span><span class="c" style="left:587px">IPv4</span><span class="c" style="left:600px;width:107px;text-align:right">54</span><span class="c" style="left:712px;white-space:pre"></span></div>
<div class="pr d" style="top:518px"><span class="c" style="left:0;width:77px;text-align:right">14</span><span class="c" style="left:83px">14.699658</span><span class="c" style="left:209px">216.219.202.75</span><span class="c" style="left:398px">216.67.70.21</span><span class="c" style="left:587px">IPv4</span><span class="c" style="left:600px;width:107px;text-align:right">54</span><span class="c" style="left:712px;white-space:pre"></span></div>
<div class="pr d" style="top:535px"><span class="c" style="left:0;width:77px;text-align:right">15</span><span class="c" style="left:83px">14.699667</span><span class="c" style="left:209px">23.62.92.120</span><span class="c" style="left:398px">91.149.35.74</span><span class="c" style="left:587px">IPv4</span><span class="c" style="left:600px;width:107px;text-align:right">54</span><span class="c" style="left:712px;white-space:pre"></span></div>
<div class="pr w" style="top:552px"><span class="c" style="left:0;width:77px;text-align:right">16</span><span class="c" style="left:83px">14.699676</span><span class="c" style="left:209px">150.204.40.96</span><span class="c" style="left:398px">126.65.162.37</span><span class="c" style="left:587px">IPv4</span><span class="c" style="left:600px;width:107px;text-align:right">54</span><span class="c" style="left:712px;white-space:pre"></span></div>
<div class="pr d" style="top:569px"><span class="c" style="left:0;width:77px;text-align:right">17</span><span class="c" style="left:83px">14.699685</span><span class="c" style="left:209px">27.174.241.120</span><span class="c" style="left:398px">134.1.209.121</span><span class="c" style="left:587px">IPv4</span><span class="c" style="left:600px;width:107px;text-align:right">54</span><span class="c" style="left:712px;white-space:pre"></span></div>
<div class="pr w" style="top:586px"><span class="c" style="left:0;width:77px;text-align:right">18</span><span class="c" style="left:83px">14.699698</span><span class="c" style="left:209px">210.59.223.101</span><span class="c" style="left:398px">127.65.204.125</span><span class="c" style="left:587px">IPv4</span><span class="c" style="left:600px;width:107px;text-align:right">54</span><span class="c" style="left:712px;white-space:pre"></span></div>
<div class="pr d" style="top:603px"><span class="c" style="left:0;width:77px;text-align:right">19</span><span class="c" style="left:83px">14.699707</span><span class="c" style="left:209px">67.53.215.100</span><span class="c" style="left:398px">106.46.97.84</span><span class="c" style="left:587px">IPv4</span><span class="c" style="left:600px;width:107px;text-align:right">54</span><span class="c" style="left:712px;white-space:pre"></span></div>

<!-- minimap -->
<svg style="left:1868px;top:275px" width="7" height="340"><rect x="0" y="0" width="7" height="340" fill="#15161a"/><rect x="0" y="0" width="7" height="9" fill="#f6dcf8"/><rect x="0" y="10" width="7" height="1" fill="#5a8ae8"/><rect x="0" y="12" width="7" height="1" fill="#fff"/><rect x="0" y="14" width="7" height="2" fill="#fff"/><rect x="0" y="17" width="7" height="1" fill="#fff"/><rect x="0" y="21" width="7" height="1" fill="#fff"/><rect x="0" y="24" width="7" height="2" fill="#fff"/><rect x="0" y="27" width="7" height="2" fill="#fff"/><rect x="0" y="30" width="7" height="1" fill="#fff"/><rect x="0" y="32" width="7" height="2" fill="#fff"/><rect x="0" y="36" width="7" height="1" fill="#fff"/><rect x="0" y="38" width="7" height="1" fill="#fff"/><rect x="0" y="42" width="7" height="2" fill="#fff"/><rect x="0" y="45" width="7" height="4" fill="#fff"/><rect x="0" y="52" width="7" height="1" fill="#fff"/><rect x="0" y="54" width="7" height="3" fill="#fff"/><rect x="0" y="60" width="7" height="1" fill="#fff"/><rect x="0" y="64" width="7" height="2" fill="#fff"/><rect x="0" y="68" width="7" height="1" fill="#fff"/><rect x="0" y="70" width="7" height="1" fill="#fff"/><rect x="0" y="74" width="7" height="4" fill="#fff"/><rect x="0" y="79" width="7" height="1" fill="#fff"/><rect x="0" y="82" width="7" height="1" fill="#fff"/><rect x="0" y="86" width="7" height="1" fill="#fff"/><rect x="0" y="90" width="7" height="1" fill="#fff"/><rect x="0" y="94" width="7" height="4" fill="#fff"/><rect x="0" y="99" width="7" height="1" fill="#fff"/><rect x="0" y="103" width="7" height="2" fill="#fff"/><rect x="0" y="106" width="7" height="1" fill="#fff"/><rect x="0" y="108" width="7" height="2" fill="#fff"/><rect x="0" y="111" width="7" height="2" fill="#fff"/><rect x="0" y="114" width="7" height="2" fill="#fff"/><rect x="0" y="117" width="7" height="2" fill="#fff"/><rect x="0" y="122" width="7" height="2" fill="#fff"/><rect x="0" y="126" width="7" height="2" fill="#fff"/><rect x="0" y="131" width="7" height="2" fill="#fff"/><rect x="0" y="135" width="7" height="1" fill="#fff"/><rect x="0" y="137" width="7" height="4" fill="#fff"/><rect x="0" y="142" width="7" height="3" fill="#fff"/><rect x="0" y="146" width="7" height="1" fill="#fff"/><rect x="0" y="150" width="7" height="1" fill="#fff"/><rect x="0" y="154" width="7" height="2" fill="#fff"/><rect x="0" y="158" width="7" height="3" fill="#fff"/><rect x="0" y="163" width="7" height="1" fill="#fff"/><rect x="0" y="167" width="7" height="1" fill="#fff"/><rect x="0" y="169" width="7" height="2" fill="#fff"/><rect x="0" y="173" width="7" height="1" fill="#fff"/><rect x="0" y="176" width="7" height="1" fill="#fff"/><rect x="0" y="179" width="7" height="2" fill="#fff"/><rect x="0" y="182" width="7" height="3" fill="#fff"/><rect x="0" y="186" width="7" height="4" fill="#fff"/><rect x="0" y="193" width="7" height="2" fill="#fff"/><rect x="0" y="197" width="7" height="1" fill="#fff"/><rect x="0" y="200" width="7" height="2" fill="#fff"/><rect x="0" y="204" width="7" height="2" fill="#fff"/><rect x="0" y="208" width="7" height="1" fill="#fff"/><rect x="0" y="210" width="7" height="1" fill="#fff"/><rect x="0" y="213" width="7" height="3" fill="#fff"/><rect x="0" y="217" width="7" height="1" fill="#fff"/><rect x="0" y="220" width="7" height="3" fill="#fff"/><rect x="0" y="226" width="7" height="3" fill="#fff"/><rect x="0" y="231" width="7" height="1" fill="#fff"/><rect x="0" y="234" width="7" height="3" fill="#fff"/><rect x="0" y="239" width="7" height="1" fill="#fff"/><rect x="0" y="242" width="7" height="1" fill="#fff"/><rect x="0" y="244" width="7" height="2" fill="#fff"/><rect x="0" y="247" width="7" height="2" fill="#fff"/><rect x="0" y="250" width="7" height="1" fill="#fff"/><rect x="0" y="253" width="7" height="1" fill="#fff"/><rect x="0" y="255" width="7" height="2" fill="#fff"/><rect x="0" y="259" width="7" height="4" fill="#fff"/><rect x="0" y="265" width="7" height="1" fill="#fff"/><rect x="0" y="267" width="7" height="2" fill="#fff"/><rect x="0" y="271" width="7" height="2" fill="#fff"/><rect x="0" y="275" width="7" height="1" fill="#fff"/><rect x="0" y="278" width="7" height="4" fill="#fff"/><rect x="0" y="285" width="7" height="1" fill="#fff"/><rect x="0" y="288" width="7" height="1" fill="#fff"/><rect x="0" y="291" width="7" height="1" fill="#fff"/><rect x="0" y="293" width="7" height="1" fill="#fff"/><rect x="0" y="295" width="7" height="1" fill="#fff"/><rect x="0" y="297" width="7" height="3" fill="#fff"/><rect x="0" y="301" width="7" height="1" fill="#fff"/><rect x="0" y="304" width="7" height="4" fill="#fff"/><rect x="0" y="311" width="7" height="1" fill="#fff"/><rect x="0" y="314" width="7" height="1" fill="#fff"/><rect x="0" y="316" width="7" height="1" fill="#fff"/><rect x="0" y="319" width="7" height="2" fill="#fff"/><rect x="0" y="323" width="7" height="2" fill="#fff"/><rect x="0" y="328" width="7" height="1" fill="#fff"/><rect x="0" y="330" width="7" height="3" fill="#fff"/></svg>
<svg style="left:9px;top:437px" width="18" height="9"><path d="M0 4.5H14" stroke="#111" stroke-width="1.2"/><path d="M13 2L17 4.5L13 7Z" fill="#111"/></svg>
<svg style="left:8px;top:454px" width="18" height="9"><path d="M3 4.5H17" stroke="#9ab8e8" stroke-width="1"/><path d="M4.5 2.5L1 4.5L4.5 6.5Z" fill="#9ab8e8"/></svg>

<!-- splitter -->
<div class="a" style="left:7px;top:616px;width:1906px;height:5px;background:#22252c;border-top:1px solid #1c1e23"></div>
<div class="a" style="left:953px;top:618px;width:17px;height:2px;background:repeating-linear-gradient(90deg,#8a8c90 0,#8a8c90 2px,transparent 2px,transparent 3px)"></div>

<!-- details -->
<div id="dp" class="a"></div>
<div class="dr " style="top:622px"><span class="tri r" style="left:7px"></span><span class="dt" style="left:23px">Frame&#32;10:&#32;708&#32;bytes&#32;on&#32;wire&#32;(5664&#32;bits),&#32;708&#32;bytes&#32;captured&#32;(5664&#32;bits)</span></div>
<div class="dr " style="top:639px"><span class="tri r" style="left:7px"></span><span class="dt" style="left:23px">Ethernet&#32;II,&#32;Src:&#32;82:28:c7:0a:88:c5&#32;(82:28:c7:0a:88:c5),&#32;Dst:&#32;Private_66:68:01&#32;(00:50:79:66:68:01)</span></div>
<div class="dr " style="top:656px"><span class="tri r" style="left:7px"></span><span class="dt" style="left:23px">Internet&#32;Protocol&#32;Version&#32;4,&#32;Src:&#32;192.168.12.66,&#32;Dst:&#32;192.168.12.2</span></div>
<div class="dr sel" style="top:673px"><span class="tri d" style="left:7px"></span><span class="dt" style="left:23px">Internet&#32;Control&#32;Message&#32;Protocol</span></div>
<div class="dr " style="top:690px"><span class="dt" style="left:43px">Type:&#32;0&#32;(Echo&#32;(ping)&#32;reply)</span></div>
<div class="dr " style="top:707px"><span class="dt" style="left:43px">Code:&#32;0</span></div>
<div class="dr " style="top:724px"><span class="dt" style="left:43px">Checksum:&#32;0xb76e&#32;[correct]</span></div>
<div class="dr " style="top:741px"><span class="dt" style="left:43px">[Checksum&#32;Status:&#32;Good]</span></div>
<div class="dr " style="top:758px"><span class="dt" style="left:43px">Identifier&#32;(BE):&#32;25987&#32;(0x6583)</span></div>
<div class="dr " style="top:775px"><span class="dt" style="left:43px">Identifier&#32;(LE):&#32;33637&#32;(0x8365)</span></div>
<div class="dr " style="top:792px"><span class="dt" style="left:43px">Sequence&#32;Number&#32;(BE):&#32;1252&#32;(0x04e4)</span></div>
<div class="dr " style="top:809px"><span class="dt" style="left:43px">Sequence&#32;Number&#32;(LE):&#32;58372&#32;(0xe404)</span></div>
<div class="dr link" style="top:826px"><span class="dt" style="left:43px">[Request&#32;frame:&#32;9]</span></div>
<div class="dr " style="top:843px"><span class="dt" style="left:43px">[Response&#32;time:&#32;0.032&#32;ms]</span></div>
<div class="dr data" style="top:860px"><span class="tri r" style="left:28px"></span><span class="dt" style="left:43px">Data&#32;(666&#32;bytes)</span></div>
<div class="a" style="left:957px;top:621px;width:6px;height:344px;background:#22252c;border-left:1px solid #1c1e23;border-right:1px solid #1c1e23"></div>
<div class="a" style="left:960px;top:786px;width:2px;height:17px;background:repeating-linear-gradient(180deg,#8a8c90 0,#8a8c90 2px,transparent 2px,transparent 3px)"></div>

<!-- hex -->
<div class="a" style="left:963px;top:621px;width:950px;height:344px;background:#252831;border-top:1px solid #2e3139;border-bottom:1px solid #1c1e23"></div>
<div class="a" style="left:1906px;top:642px;width:4px;height:96px;background:#5a5d66;border-radius:2px"></div>
<div class="hbg dk" style="top:622px;left:1026px;width:279px"></div>
<div class="hbg bl" style="top:622px;left:1305px;width:153px"></div>
<div class="hbg dk" style="top:622px;left:1485px;width:99px"></div>
<div class="hbg bl" style="top:622px;left:1584px;width:54px"></div>
<div class="hr" style="top:622px"><span class="ho" style="left:972px">0020</span><span class="hx" style="left:1026px">0c&#32;02&#32;00&#32;00&#32;b7&#32;6e&#32;65&#32;83&#32;&#32;04&#32;e4&#32;08&#32;09&#32;0a&#32;0b&#32;0c&#32;0d</span><span class="hx" style="left:1485px"><i>·</i><i>·</i><i>·</i><i>·</i><i>·</i>ne<i>·</i>&#32;<i>·</i><i>·</i>······</span></div>
<div class="hbg bl" style="top:639px;left:1026px;width:432px"></div>
<div class="hbg bl" style="top:639px;left:1485px;width:153px"></div>
<div class="hr" style="top:639px"><span class="ho" style="left:972px">0030</span><span class="hx" style="left:1026px">0e&#32;0f&#32;10&#32;11&#32;12&#32;13&#32;14&#32;15&#32;&#32;16&#32;17&#32;18&#32;19&#32;1a&#32;1b&#32;1c&#32;1d</span><span class="hx" style="left:1485px">········&#32;········</span></div>
<div class="hbg bl" style="top:656px;left:1026px;width:432px"></div>
<div class="hbg bl" style="top:656px;left:1485px;width:153px"></div>
<div class="hr" style="top:656px"><span class="ho" style="left:972px">0040</span><span class="hx" style="left:1026px">1e&#32;1f&#32;20&#32;21&#32;22&#32;23&#32;24&#32;25&#32;&#32;26&#32;27&#32;28&#32;29&#32;2a&#32;2b&#32;2c&#32;2d</span><span class="hx" style="left:1485px">··&#32;!"#$%&#32;&amp;'()*+,-</span></div>
<div class="hbg bl" style="top:673px;left:1026px;width:432px"></div>
<div class="hbg bl" style="top:673px;left:1485px;width:153px"></div>
<div class="hr" style="top:673px"><span class="ho" style="left:972px">0050</span><span class="hx" style="left:1026px">2e&#32;2f&#32;30&#32;31&#32;32&#32;33&#32;34&#32;35&#32;&#32;36&#32;37&#32;38&#32;39&#32;3a&#32;3b&#32;3c&#32;3d</span><span class="hx" style="left:1485px">./012345&#32;6789:;&lt;=</span></div>
<div class="hbg bl" style="top:690px;left:1026px;width:432px"></div>
<div class="hbg bl" style="top:690px;left:1485px;width:153px"></div>
<div class="hr" style="top:690px"><span class="ho" style="left:972px">0060</span><span class="hx" style="left:1026px">3e&#32;3f&#32;40&#32;41&#32;42&#32;43&#32;44&#32;45&#32;&#32;46&#32;47&#32;48&#32;49&#32;4a&#32;4b&#32;4c&#32;4d</span><span class="hx" style="left:1485px">&gt;?@ABCDE&#32;FGHIJKLM</span></div>
<div class="hbg bl" style="top:707px;left:1026px;width:432px"></div>
<div class="hbg bl" style="top:707px;left:1485px;width:153px"></div>
<div class="hr" style="top:707px"><span class="ho" style="left:972px">0070</span><span class="hx" style="left:1026px">4e&#32;4f&#32;50&#32;51&#32;52&#32;53&#32;54&#32;55&#32;&#32;56&#32;57&#32;58&#32;59&#32;5a&#32;5b&#32;5c&#32;5d</span><span class="hx" style="left:1485px">NOPQRSTU&#32;VWXYZ[\]</span></div>
<div class="hbg bl" style="top:724px;left:1026px;width:432px"></div>
<div class="hbg bl" style="top:724px;left:1485px;width:153px"></div>
<div class="hr" style="top:724px"><span class="ho" style="left:972px">0080</span><span class="hx" style="left:1026px">5e&#32;5f&#32;60&#32;61&#32;62&#32;63&#32;64&#32;65&#32;&#32;66&#32;67&#32;68&#32;69&#32;6a&#32;6b&#32;6c&#32;6d</span><span class="hx" style="left:1485px">^_`abcde&#32;fghijklm</span></div>
<div class="hbg bl" style="top:741px;left:1026px;width:432px"></div>
<div class="hbg bl" style="top:741px;left:1485px;width:153px"></div>
<div class="hr" style="top:741px"><span class="ho" style="left:972px">0090</span><span class="hx" style="left:1026px">6e&#32;6f&#32;70&#32;71&#32;72&#32;73&#32;74&#32;75&#32;&#32;76&#32;77&#32;78&#32;79&#32;7a&#32;7b&#32;7c&#32;7d</span><span class="hx" style="left:1485px">nopqrstu&#32;vwxyz{|}</span></div>
<div class="hbg bl" style="top:758px;left:1026px;width:432px"></div>
<div class="hbg bl" style="top:758px;left:1485px;width:153px"></div>
<div class="hr" style="top:758px"><span class="ho" style="left:972px">00a0</span><span class="hx" style="left:1026px">7e&#32;7f&#32;80&#32;81&#32;82&#32;83&#32;84&#32;85&#32;&#32;86&#32;87&#32;88&#32;89&#32;8a&#32;8b&#32;8c&#32;8d</span><span class="hx" style="left:1485px">~·······&#32;········</span></div>
<div class="hbg bl" style="top:775px;left:1026px;width:432px"></div>
<div class="hbg bl" style="top:775px;left:1485px;width:153px"></div>
<div class="hr" style="top:775px"><span class="ho" style="left:972px">00b0</span><span class="hx" style="left:1026px">8e&#32;8f&#32;90&#32;91&#32;92&#32;93&#32;94&#32;95&#32;&#32;96&#32;97&#32;98&#32;99&#32;9a&#32;9b&#32;9c&#32;9d</span><span class="hx" style="left:1485px">········&#32;········</span></div>
<div class="hbg bl" style="top:792px;left:1026px;width:432px"></div>
<div class="hbg bl" style="top:792px;left:1485px;width:153px"></div>
<div class="hr" style="top:792px"><span class="ho" style="left:972px">00c0</span><span class="hx" style="left:1026px">9e&#32;9f&#32;a0&#32;a1&#32;a2&#32;a3&#32;a4&#32;a5&#32;&#32;a6&#32;a7&#32;a8&#32;a9&#32;aa&#32;ab&#32;ac&#32;ad</span><span class="hx" style="left:1485px">········&#32;········</span></div>
<div class="hbg bl" style="top:809px;left:1026px;width:432px"></div>
<div class="hbg bl" style="top:809px;left:1485px;width:153px"></div>
<div class="hr" style="top:809px"><span class="ho" style="left:972px">00d0</span><span class="hx" style="left:1026px">ae&#32;af&#32;b0&#32;b1&#32;b2&#32;b3&#32;b4&#32;b5&#32;&#32;b6&#32;b7&#32;b8&#32;b9&#32;ba&#32;bb&#32;bc&#32;bd</span><span class="hx" style="left:1485px">········&#32;········</span></div>
<div class="hbg bl" style="top:826px;left:1026px;width:432px"></div>
<div class="hbg bl" style="top:826px;left:1485px;width:153px"></div>
<div class="hr" style="top:826px"><span class="ho" style="left:972px">00e0</span><span class="hx" style="left:1026px">be&#32;bf&#32;c0&#32;c1&#32;c2&#32;c3&#32;c4&#32;c5&#32;&#32;c6&#32;c7&#32;c8&#32;c9&#32;ca&#32;cb&#32;cc&#32;cd</span><span class="hx" style="left:1485px">········&#32;········</span></div>
<div class="hbg bl" style="top:843px;left:1026px;width:432px"></div>
<div class="hbg bl" style="top:843px;left:1485px;width:153px"></div>
<div class="hr" style="top:843px"><span class="ho" style="left:972px">00f0</span><span class="hx" style="left:1026px">ce&#32;cf&#32;d0&#32;d1&#32;d2&#32;d3&#32;d4&#32;d5&#32;&#32;d6&#32;d7&#32;d8&#32;d9&#32;da&#32;db&#32;dc&#32;dd</span><span class="hx" style="left:1485px">········&#32;········</span></div>
<div class="hbg bl" style="top:860px;left:1026px;width:432px"></div>
<div class="hbg bl" style="top:860px;left:1485px;width:153px"></div>
<div class="hr" style="top:860px"><span class="ho" style="left:972px">0100</span><span class="hx" style="left:1026px">de&#32;df&#32;e0&#32;e1&#32;e2&#32;e3&#32;e4&#32;e5&#32;&#32;e6&#32;e7&#32;e8&#32;e9&#32;ea&#32;eb&#32;ec&#32;ed</span><span class="hx" style="left:1485px">········&#32;········</span></div>
<div class="hbg bl" style="top:877px;left:1026px;width:432px"></div>
<div class="hbg bl" style="top:877px;left:1485px;width:153px"></div>
<div class="hr" style="top:877px"><span class="ho" style="left:972px">0110</span><span class="hx" style="left:1026px">ee&#32;ef&#32;f0&#32;f1&#32;f2&#32;f3&#32;f4&#32;f5&#32;&#32;f6&#32;f7&#32;f8&#32;f9&#32;fa&#32;fb&#32;fc&#32;fd</span><span class="hx" style="left:1485px">········&#32;········</span></div>
<div class="hbg bl" style="top:894px;left:1026px;width:432px"></div>
<div class="hbg bl" style="top:894px;left:1485px;width:153px"></div>
<div class="hr" style="top:894px"><span class="ho" style="left:972px">0120</span><span class="hx" style="left:1026px">fe&#32;ff&#32;00&#32;01&#32;02&#32;03&#32;04&#32;05&#32;&#32;06&#32;07&#32;08&#32;09&#32;0a&#32;0b&#32;0c&#32;0d</span><span class="hx" style="left:1485px">········&#32;········</span></div>
<div class="hbg bl" style="top:911px;left:1026px;width:432px"></div>
<div class="hbg bl" style="top:911px;left:1485px;width:153px"></div>
<div class="hr" style="top:911px"><span class="ho" style="left:972px">0130</span><span class="hx" style="left:1026px">0e&#32;0f&#32;10&#32;11&#32;12&#32;13&#32;14&#32;15&#32;&#32;16&#32;17&#32;18&#32;19&#32;1a&#32;1b&#32;1c&#32;1d</span><span class="hx" style="left:1485px">········&#32;········</span></div>
<div class="hbg bl" style="top:928px;left:1026px;width:432px"></div>
<div class="hbg bl" style="top:928px;left:1485px;width:153px"></div>
<div class="hr" style="top:928px"><span class="ho" style="left:972px">0140</span><span class="hx" style="left:1026px">1e&#32;1f&#32;20&#32;21&#32;22&#32;23&#32;24&#32;25&#32;&#32;26&#32;27&#32;28&#32;29&#32;2a&#32;2b&#32;2c&#32;2d</span><span class="hx" style="left:1485px">··&#32;!"#$%&#32;&amp;'()*+,-</span></div>
<div class="hbg bl" style="top:945px;left:1026px;width:432px"></div>
<div class="hbg bl" style="top:945px;left:1485px;width:153px"></div>
<div class="hr" style="top:945px"><span class="ho" style="left:972px">0150</span><span class="hx" style="left:1026px">2e&#32;2f&#32;30&#32;31&#32;32&#32;33&#32;34&#32;35&#32;&#32;36&#32;37&#32;38&#32;39&#32;3a&#32;3b&#32;3c&#32;3d</span><span class="hx" style="left:1485px">./012345&#32;6789:;&lt;=</span></div>

<!-- status bar -->
<div id="st" class="a"></div>
<div class="a" style="left:17px;top:972px;width:13px;height:13px;border-radius:50%;background:#e3dc73"></div>
<svg style="left:39px;top:969px" width="15" height="16"><path d="M1 1H11V15H1Z" fill="#eeeeee"/><path d="M1 1H11V4H1Z" fill="#3a8ee0"/><path d="M3 6H9M3 12H9" stroke="#aaa" stroke-width="0.8"/><path d="M4 11.5L12 3L14 1.5" stroke="#333" stroke-width="2.2"/><path d="M3.5 12.5L5 10.5" stroke="#111" stroke-width="2"/></svg>
<div class="a" style="left:70px;top:970px;font-size:15px;color:#f0f0f0">Internet Control Message Protocol (icmp), 674 bytes</div>
<div class="a" style="left:1249px;top:970px;width:1px;height:18px;background:repeating-linear-gradient(180deg,#888 0,#888 1px,transparent 1px,transparent 2px)"></div>
<div class="a" style="left:1262px;top:970px;font-size:15px;color:#f0f0f0">Packets: 260135</div>
<div class="a" style="left:1791px;top:970px;width:1px;height:18px;background:repeating-linear-gradient(180deg,#888 0,#888 1px,transparent 1px,transparent 2px)"></div>
<div class="a" style="left:1806px;top:970px;font-size:15px;color:#f0f0f0">Profile: Default</div>

<!-- vmware status -->
<div id="vs" class="a"></div>
<div class="a" style="left:2px;top:999px;font-size:15.5px;color:#e8e8e8;white-space:nowrap;transform-origin:0 0;transform:scaleX(0.963)">To direct input to this VM, move the mouse pointer inside or press Ctrl+G.</div>

<!-- taskbar -->
<div id="tb" class="a"></div>
<!-- taskbar icons -->
<svg style="left:615px;top:1036px" width="30" height="30"><defs><linearGradient id="wg" x1="0" y1="0" x2="1" y2="1"><stop offset="0" stop-color="#7ad3f8"/><stop offset="1" stop-color="#1a9ae8"/></linearGradient></defs><rect x="0" y="0" width="14" height="14" rx="1.5" fill="url(#wg)"/><rect x="15.5" y="0" width="14" height="14" rx="1.5" fill="url(#wg)"/><rect x="0" y="15.5" width="14" height="14" rx="1.5" fill="url(#wg)"/><rect x="15.5" y="15.5" width="14" height="14" rx="1.5" fill="url(#wg)"/></svg>
<svg style="left:671px;top:1037px" width="30" height="28"><path d="M0 2Q0 0 2 0H10L13 3H28Q30 3 30 5V26Q30 28 28 28H2Q0 28 0 26Z" fill="#f5c542"/><path d="M0 7H30V26Q30 28 28 28H2Q0 28 0 26Z" fill="#fbd65a"/><rect x="5" y="19" width="20" height="9" rx="2" fill="#1b78d6"/><rect x="8" y="22" width="14" height="2" fill="#7cc0f5"/></svg>
<svg style="left:726px;top:1035px" width="30" height="30"><defs><linearGradient id="eg" x1="0" y1="0" x2="1" y2="1"><stop offset="0" stop-color="#2fb6e8"/><stop offset="0.6" stop-color="#1c8ad8"/><stop offset="1" stop-color="#0b5aa8"/></linearGradient></defs><circle cx="15" cy="15" r="15" fill="url(#eg)"/><path d="M17 9Q28 9 29 18Q30 13 27 8Q22 1 14 1Q28 3 17 9Z" fill="#5ad46a"/><path d="M8 17Q9 10 16 10Q22 10 22 15Q22 18 18 18H12Q14 24 22 24Q26 24 28 22Q24 30 14 29Q5 27 8 17Z" fill="#0f4f9a"/></svg>
<svg style="left:785px;top:1035px" width="23" height="30"><rect x="0" y="2" width="22" height="27" rx="1" fill="#5ac0f0"/><rect x="0" y="27" width="22" height="3" fill="#b86a30"/><path d="M4 9H18M4 14H18M4 19H18" stroke="#0e5a8a" stroke-width="1.8"/><path d="M4 2V4M8 2V4M12 2V4M16 2V4" stroke="#0e3a5a" stroke-width="2"/></svg>
<svg style="left:835px;top:1035px" width="31" height="31"><path d="M15.5 1.5A13.5 13.5 0 1 1 8 27L1.5 29.5L4 23.5A13.5 13.5 0 0 1 15.5 1.5Z" fill="none" stroke="#2ec86a" stroke-width="2.6"/><path d="M10 9Q12 7 13 9L14 12Q14 13 13 14Q14 17 17 18Q18 17 19 17L22 18Q24 19 22 21Q20 23 17 22Q10 19 9 13Q9 10 10 9Z" fill="#2ec86a"/></svg>
<svg style="left:891px;top:1035px" width="30" height="30"><defs><radialGradient id="fg" cx="0.4" cy="0.7" r="0.7"><stop offset="0" stop-color="#ffb53a"/><stop offset="0.6" stop-color="#ff5a3a"/><stop offset="1" stop-color="#e0244a"/></radialGradient></defs><circle cx="15" cy="16" r="14" fill="url(#fg)"/><circle cx="14" cy="16" r="7.5" fill="#8a4ad8"/><path d="M3 8Q8 2 16 3Q21 0 20 1Q28 5 29 14Q26 7 19 7Q14 6 10 9Z" fill="#ffc030"/></svg>
<svg style="left:946px;top:1035px" width="30" height="30"><rect x="6" y="0" width="24" height="30" rx="2" fill="#2b7cd3"/><rect x="6" y="7" width="24" height="8" fill="#1e5fb8"/><rect x="6" y="15" width="24" height="8" fill="#174ea0"/><rect x="0" y="7" width="17" height="16" rx="1.5" fill="#185abd"/><text x="8.5" y="20" font-size="12" font-weight="bold" text-anchor="middle" fill="#fff" font-family="Liberation Sans">W</text></svg>
<svg style="left:1001px;top:1035px" width="30" height="30"><rect x="6" y="0" width="24" height="30" rx="2" fill="#21a366"/><rect x="18" y="0" width="12" height="15" fill="#33c481"/><rect x="6" y="15" width="24" height="15" fill="#107c41"/><rect x="0" y="7" width="17" height="16" rx="1.5" fill="#107c41"/><text x="8.5" y="20" font-size="12" font-weight="bold" text-anchor="middle" fill="#fff" font-family="Liberation Sans">X</text></svg>
<svg style="left:1056px;top:1035px" width="31" height="31"><path d="M22 1L30 5V26L22 30L8 17L3 21L0 19V12L3 10L8 14ZM22 8L13 15.5L22 23Z" fill="#1a8ad8"/><path d="M22 1L30 5V26L22 30Z" fill="#2aa8f0"/></svg>
<svg style="left:1111px;top:1035px" width="31" height="31"><circle cx="16" cy="5" r="4.5" fill="#7b83eb"/><circle cx="26" cy="8" r="3.5" fill="#5a62c8"/><path d="M20 12H31V22Q31 28 25 28Q20 28 20 22Z" fill="#5a62c8"/><path d="M8 11H23V23Q23 30 15.5 30Q8 30 8 23Z" fill="#7b83eb"/><rect x="0" y="8" width="15" height="15" rx="1.5" fill="#4b53bc"/><text x="7.5" y="20" font-size="11" font-weight="bold" text-anchor="middle" fill="#fff" font-family="Liberation Sans">T</text></svg>
<svg style="left:1166px;top:1035px" width="30" height="30"><rect x="9.5" y="2" width="18.5" height="18.5" rx="2.5" fill="none" stroke="#1d9ee3" stroke-width="3.2"/><rect x="2" y="9.5" width="18.5" height="18.5" rx="2.5" fill="none" stroke="#f5a01e" stroke-width="3.2"/><path d="M9.5 13V20.5H17" fill="none" stroke="#1d9ee3" stroke-width="3.2"/></svg>
<svg style="left:1222px;top:1036px" width="28" height="28"><rect x="0" y="0" width="28" height="28" fill="#e42535"/><path d="M6 18L10 11L14 17L18 11L22 18M4 19H24" fill="none" stroke="#fff" stroke-width="2.2"/><circle cx="10" cy="10" r="2.2" fill="#fff"/><circle cx="18" cy="10" r="2.2" fill="#fff"/><circle cx="6" cy="19" r="2" fill="#fff"/><circle cx="22" cy="19" r="2" fill="#fff"/><circle cx="14" cy="18" r="2" fill="#fff"/></svg>
<svg style="left:1277px;top:1036px" width="28" height="28"><defs><linearGradient id="pg" x1="0" y1="0" x2="1" y2="1"><stop offset="0" stop-color="#3aa8f0"/><stop offset="1" stop-color="#5a5ad8"/></linearGradient></defs><rect x="0" y="0" width="28" height="28" rx="4" fill="url(#pg)"/><path d="M0 22L12 11L28 24V28H0Z" fill="#2aa0e8"/><path d="M4 28L16 16L28 26V28Z" fill="#60d0ff"/><circle cx="20" cy="6" r="2.6" fill="#fff"/></svg>
<div class="a" style="left:682px;top:1071px;width:8px;height:3px;border-radius:2px;background:#9aa0a6"></div>
<div class="a" style="left:737px;top:1071px;width:8px;height:3px;border-radius:2px;background:#9aa0a6"></div>
<div class="a" style="left:847px;top:1071px;width:8px;height:3px;border-radius:2px;background:#9aa0a6"></div>
<div class="a" style="left:902px;top:1071px;width:8px;height:3px;border-radius:2px;background:#9aa0a6"></div>
<div class="a" style="left:957px;top:1071px;width:8px;height:3px;border-radius:2px;background:#9aa0a6"></div>
<div class="a" style="left:1177px;top:1071px;width:8px;height:3px;border-radius:2px;background:#9aa0a6"></div>
<div class="a" style="left:1287px;top:1071px;width:8px;height:3px;border-radius:2px;background:#9aa0a6"></div>
<!-- tray -->
<svg style="left:1601px;top:1045px" width="15" height="10"><path d="M1 9L7.5 2L14 9" fill="none" stroke="#f0f0f0" stroke-width="1.8"/></svg>
<svg style="left:1637px;top:1042px" width="22" height="19"><path d="M4 14A4 4 0 0 1 4 6A6 6 0 0 1 15 5A4.5 4.5 0 0 1 17 14Z" fill="#b8b8b8"/><circle cx="14.5" cy="12.5" r="6" fill="#3aa8f0"/><path d="M14.5 10V16M14.5 8V9" stroke="#fff" stroke-width="1.8"/></svg>
<svg style="left:1677px;top:1043px" width="22" height="14"><path d="M3 13A3 3 0 0 1 2 7A5 5 0 0 1 9 3A7 7 0 0 1 18 6A4 4 0 0 1 19 13Z" fill="#1e88e5"/><path d="M9 3A7 7 0 0 1 18 6A4 4 0 0 1 19 13H10Z" fill="#28a0f0"/></svg>
<svg style="left:1718px;top:1042px" width="21" height="16"><path d="M1 6Q10.5 -2 20 6M4 9Q10.5 3 17 9M7 12Q10.5 9 14 12" fill="none" stroke="#f0f0f0" stroke-width="1.7"/><circle cx="10.5" cy="14.5" r="1.5" fill="#f0f0f0"/></svg>
<svg style="left:1748px;top:1041px" width="21" height="18"><path d="M1 6H4.5L9.5 2V16L4.5 12H1Z" fill="none" stroke="#f0f0f0" stroke-width="1.5"/><path d="M12.5 6Q14.5 9 12.5 12M15 4Q18 9 15 14" fill="none" stroke="#f0f0f0" stroke-width="1.5"/><path d="M17.5 2Q21.5 9 17.5 16" fill="none" stroke="#777" stroke-width="1.2"/></svg>
<svg style="left:1778px;top:1040px" width="22" height="18"><rect x="1" y="5" width="17" height="11" rx="2" fill="none" stroke="#f0f0f0" stroke-width="1.6"/><rect x="18.5" y="8" width="2.5" height="5" rx="1" fill="#f0f0f0"/><path d="M6 0L2 7H5L3 12" fill="none" stroke="#f0f0f0" stroke-width="1.3"/><rect x="3" y="7" width="12" height="7" fill="#f0f0f0"/></svg>
<div class="a" style="left:1815px;top:1030px;width:80px;text-align:right;font-size:15px;color:#f4f4f4;line-height:20px">05:29</div><div class="a" style="left:1805px;top:1050px;width:90px;text-align:right;font-size:15px;color:#f4f4f4;line-height:20px">16/07/2025</div>
<!-- vmware status icons -->
<svg style="left:1687px;top:998px" width="210" height="22">
 <path d="M1 11L4 2H16L19 11V17H1Z" fill="none" stroke="#9a9a9a" stroke-width="1.3"/><path d="M1 11H19" stroke="#9a9a9a" stroke-width="1.3"/><circle cx="17" cy="17" r="3" fill="#7ac843"/>
 <circle cx="35" cy="10" r="8" fill="none" stroke="#9a9a9a" stroke-width="1.3"/><circle cx="35" cy="10" r="2" fill="none" stroke="#9a9a9a" stroke-width="1.3"/><circle cx="42" cy="17" r="3" fill="#7ac843"/>
 <rect x="50" y="2" width="10" height="8" fill="none" stroke="#9a9a9a" stroke-width="1.2"/><rect x="55" y="8" width="10" height="8" fill="none" stroke="#9a9a9a" stroke-width="1.2"/><circle cx="66" cy="17" r="3" fill="#7ac843"/>
 <path d="M76 7H80L85 3V17L80 13H76Z" fill="none" stroke="#9a9a9a" stroke-width="1.3"/><path d="M88 7Q90 10 88 13" fill="none" stroke="#9a9a9a" stroke-width="1.2"/><circle cx="90" cy="17" r="3" fill="#7ac843"/>
 <circle cx="110" cy="10" r="7" fill="none" stroke="#666" stroke-width="1.3"/><circle cx="110" cy="10" r="3" fill="none" stroke="#666" stroke-width="1.3"/>
 <path d="M127 8H141V18H127Z" fill="#5a5a5a"/><rect x="130" y="2" width="8" height="6" fill="none" stroke="#5a5a5a" stroke-width="1.3"/>
 <path d="M152 4Q148 10 152 16M168 4Q172 10 168 16M155 6Q153 10 155 14M165 6Q167 10 165 14" fill="none" stroke="#5a5a5a" stroke-width="1.2"/><circle cx="160" cy="10" r="2" fill="none" stroke="#5a5a5a" stroke-width="1.2"/>
 <rect x="178" y="0" width="2" height="22" fill="#e8e8e8"/>
 <path d="M188 3H207V14L200 20H188Z" fill="none" stroke="#9a9a9a" stroke-width="1.3"/><path d="M200 20V14H207" fill="none" stroke="#9a9a9a" stroke-width="1.3"/>
</svg>
</body></html>
